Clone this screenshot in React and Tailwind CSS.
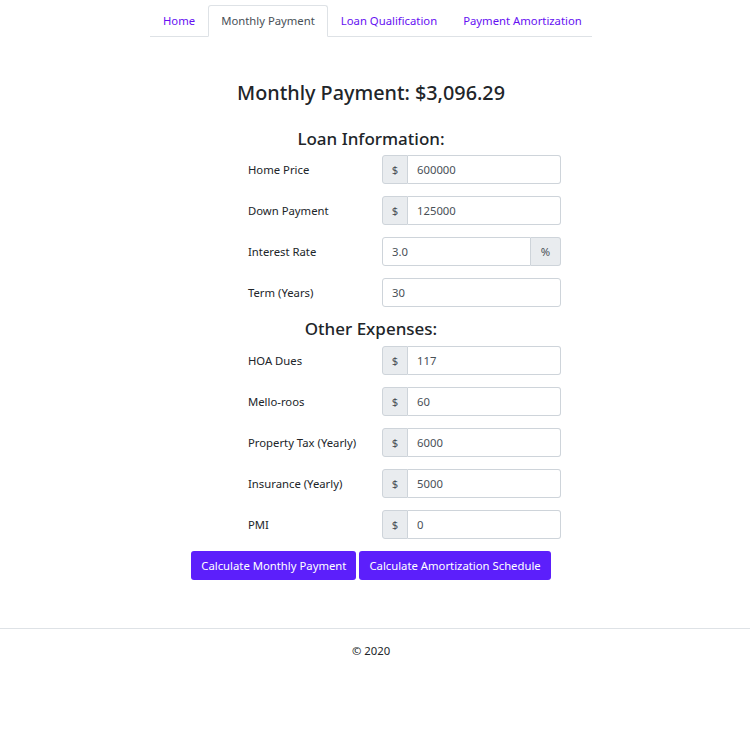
const tabs = [
  { label: 'Home' },
  { label: 'Monthly Payment', active: true },
  { label: 'Loan Qualification' },
  { label: 'Payment Amortization' },
];

const loanFields = [
  { label: 'Home Price', value: '600000', prefix: '$' },
  { label: 'Down Payment', value: '125000', prefix: '$' },
  { label: 'Interest Rate', value: '3.0', suffix: '%' },
  { label: 'Term (Years)', value: '30' },
];

const expenseFields = [
  { label: 'HOA Dues', value: '117', prefix: '$' },
  { label: 'Mello-roos', value: '60', prefix: '$' },
  { label: 'Property Tax (Yearly)', value: '6000', prefix: '$' },
  { label: 'Insurance (Yearly)', value: '5000', prefix: '$' },
  { label: 'PMI', value: '0', prefix: '$' },
];

const Field = ({ label, value, prefix, suffix }) => (
  <div className="flex items-center">
    <label className="w-[134px] pt-[2px] text-[11.3px] text-[#212529]">{label}</label>
    <div className="flex w-[179px] h-[29px] text-[11.3px]">
      {prefix && (
        <span className="w-[26px] pt-[1px] flex items-center justify-center bg-[#e9ecef] border border-[#ced4da] rounded-l-[3px] text-[#495057]">
          {prefix}
        </span>
      )}
      <input
        defaultValue={value}
        className={`flex-1 min-w-0 px-[9px] pt-[1px] border border-[#ced4da] text-[#495057] outline-none ${prefix ? 'border-l-0 rounded-r-[3px]' : suffix ? 'rounded-l-[3px]' : 'rounded-[3px]'}`}
      />
      {suffix && (
        <span className="w-[30px] pt-[1px] flex items-center justify-center bg-[#e9ecef] border border-l-0 border-[#ced4da] rounded-r-[3px] text-[#495057]">
          {suffix}
        </span>
      )}
    </div>
  </div>
);

export default function App() {
  return (
    <div className="w-[750px] min-h-[750px] bg-white font-['Noto_Sans','Open_Sans',sans-serif] text-[#212529]">
      <div className="w-[742px]">
        <ul className="ml-[150px] w-[442px] mt-[5px] flex border-b border-[#dee2e6] text-[11.3px] leading-[18px]">
          {tabs.map((t) => (
            <li key={t.label} className="-mb-px">
              <a
                href="#"
                className={`block whitespace-nowrap px-[12px] py-[6px] border rounded-t-[3px] ${t.active ? 'border-[#dee2e6] border-b-white bg-white text-[#495057]' : 'border-transparent text-[#6610f2]'}`}
              >
                {t.label}
              </a>
            </li>
          ))}
        </ul>

        <h3 className="mt-[43px] text-center text-[19.8px] leading-[25px] font-medium">
          Monthly Payment: $3,096.29
        </h3>

        <h4 className="mt-[23px] mb-[5px] text-center text-[17px] leading-[22px] font-medium">
          Loan Information:
        </h4>
        <div className="pl-[248px] flex flex-col gap-[12px]">
          {loanFields.map((f) => (
            <Field key={f.label} {...f} />
          ))}
        </div>

        <h4 className="mt-[11px] mb-[6px] text-center text-[17px] leading-[22px] font-medium">
          Other Expenses:
        </h4>
        <div className="pl-[248px] flex flex-col gap-[12px]">
          {expenseFields.map((f) => (
            <Field key={f.label} {...f} />
          ))}
        </div>

        <div className="mt-[12px] flex justify-center gap-[3px]">
          <button className="h-[29px] px-[10px] pt-[1px] rounded-[3px] bg-[#5c1ffb] text-white text-[11.3px]">
            Calculate Monthly Payment
          </button>
          <button className="h-[29px] px-[10px] pt-[1px] rounded-[3px] bg-[#5c1ffb] text-white text-[11.3px]">
            Calculate Amortization Schedule
          </button>
        </div>
      </div>

      <footer className="mt-[48px] border-t border-[#dee2e6] w-[750px]">
        <div className="w-[742px] text-center text-[11.3px] pt-[14px]">© 2020</div>
      </footer>
    </div>
  );
}
